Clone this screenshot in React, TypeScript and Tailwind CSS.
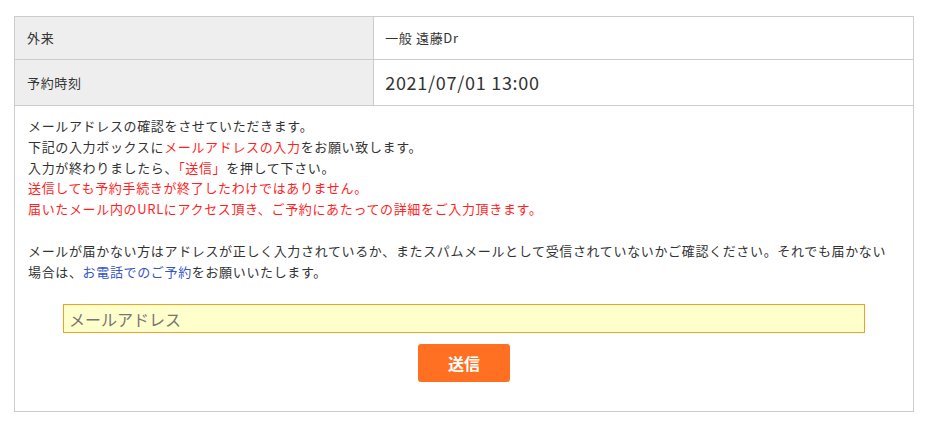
import React from "react";

export default function App() {
  const font = { fontFamily: '"Noto Sans CJK JP", "Noto Sans", sans-serif' };
  return (
    <div className="min-h-[428px] w-[929px] bg-white pt-4 text-[#333333]" style={font}>
      <div className="ml-[14px] w-[900px] border border-[#cccccc] text-[13px] tracking-[0.05em]">
        <div className="flex border-b border-[#cccccc]">
          <div className="w-[40%] border-r border-[#cccccc] bg-[#eeeeee] px-3 py-[10px] leading-[22px]">外来</div>
          <div className="flex-1 py-[10px] pl-[11px] pr-3 leading-[22px]">一般 遠藤Dr</div>
        </div>
        <div className="flex border-b border-[#cccccc]">
          <div className="flex w-[40%] items-center border-r border-[#cccccc] bg-[#eeeeee] px-3 py-[10px] leading-[25px]">予約時刻</div>
          <div className="flex-1 py-[10px] pl-[11px] pr-3 text-[18px] leading-[25px] tracking-[0.04em]">2021/07/01 13:00</div>
        </div>
        <div className="px-[13px] pb-[29px] pt-[10px] leading-[20.8px]">
          <p>
            メールアドレスの確認をさせていただきます。
            <br />
            下記の入力ボックスに<span className="text-[#ff1f1f]">メールアドレスの入力</span>をお願い致します。
            <br />
            入力が終わりましたら、<span className="text-[#ff1f1f]">「送信」</span>を押して下さい。
            <br />
            <span className="text-[#ff1f1f]">送信しても予約手続きが終了したわけではありません。</span>
            <br />
            <span className="text-[#ff1f1f]">届いたメール内のURLにアクセス頂き、ご予約にあたっての詳細をご入力頂きます。</span>
            <br />
            <br />
            メールが届かない方はアドレスが正しく入力されているか、またスパムメールとして受信されていないかご確認ください。それでも届かない
            <br />
            場合は、<span className="text-[#3556c8]">お電話でのご予約</span>をお願いいたします。
          </p>
          <div className="mt-[22px] flex flex-col items-center">
            <input
              type="text"
              placeholder="メールアドレス"
              className="h-[29px] w-[92%] border border-[#f5a023] bg-[#ffffcc] px-[5px] text-[16px] tracking-normal text-[#333] outline-none placeholder:text-[#757575]"
              style={font}
            />
            <button
              className="mt-[11px] h-[38px] w-[92px] rounded-[3px] bg-[#ff7022] text-[16px] font-bold tracking-normal text-white"
              style={font}
            >
              送信
            </button>
          </div>
        </div>
      </div>
    </div>
  );
}
